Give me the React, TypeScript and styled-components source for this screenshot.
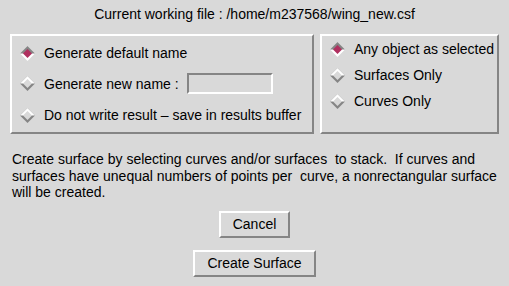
import styled, { createGlobalStyle } from "styled-components";

const BG = "#d9d9d9";
const LIGHT = "#ffffff";
const DARK = "#858585";
const SELECT = "#b03060";

const GlobalStyle = createGlobalStyle`
  html, body {
    margin: 0;
    padding: 0;
    background: ${BG};
  }
  body {
    font-family: "Liberation Sans", Arial, sans-serif;
    font-size: 14px;
    color: #000;
  }
`;

const Dialog = styled.div`
  width: 509px;
  height: 286px;
  background: ${BG};
  box-sizing: border-box;
  display: flex;
  flex-direction: column;
`;

const Title = styled.div`
  height: 34px;
  padding-top: 6px;
  box-sizing: border-box;
  text-align: center;
  line-height: 16px;
`;

const FrameRow = styled.div`
  display: flex;
  gap: 6px;
  padding-left: 10px;
`;

const Frame = styled.div<{ $width: number; $padTop: number }>`
  width: ${({ $width }) => $width}px;
  height: 100px;
  box-sizing: border-box;
  border: 2px solid;
  border-color: ${LIGHT} ${DARK} ${DARK} ${LIGHT};
  padding: ${({ $padTop }) => $padTop}px 0 0 8px;
  display: flex;
  flex-direction: column;
`;

const Option = styled.div<{ $height: number }>`
  height: ${({ $height }) => $height}px;
  display: flex;
  align-items: center;
  gap: 9px;
  white-space: nowrap;
`;

const NameField = styled.div`
  width: 86px;
  height: 21px;
  box-sizing: border-box;
  border: 2px solid;
  border-color: ${DARK} ${LIGHT} ${LIGHT} ${DARK};
  margin-left: 8px;
`;

const Label = styled.span`
  display: flex;
  align-items: center;
`;

const Description = styled.p`
  margin: 17px 0 0 12px;
  width: 490px;
  line-height: 16.5px;
  white-space: pre-wrap;
`;

const Buttons = styled.div`
  margin-top: 10px;
  display: flex;
  flex-direction: column;
  align-items: center;
  gap: 12px;
`;

const PushButton = styled.button`
  height: 27px;
  box-sizing: border-box;
  padding: 0 12px;
  border: 2px solid;
  border-color: ${LIGHT} ${DARK} ${DARK} ${LIGHT};
  background: ${BG};
  font-family: "Liberation Sans", Arial, sans-serif;
  font-size: 14px;
  color: #000;
  line-height: 1;
`;

const Diamond = ({ on }: { on: boolean }) => (
  <svg width="15" height="15" viewBox="0 0 15 15" style={{ flex: "none" }}>
    <polygon points="7.5,0 15,7.5 7.5,15 0,7.5" fill={on ? LIGHT : DARK} />
    <polygon points="0,7.5 7.5,0 15,7.5" fill={on ? DARK : LIGHT} />
    <polygon points="7.5,3 12,7.5 7.5,12 3,7.5" fill={on ? SELECT : BG} />
  </svg>
);

const App = () => (
  <>
    <GlobalStyle />
    <Dialog>
      <Title>Current working file : /home/m237568/wing_new.csf</Title>
      <FrameRow>
        <Frame $width={304} $padTop={3}>
          <Option $height={28}>
            <Diamond on />
            <Label>Generate default name</Label>
          </Option>
          <Option $height={33}>
            <Diamond on={false} />
            <Label>
              Generate new name :
              <NameField />
            </Label>
          </Option>
          <Option $height={30}>
            <Diamond on={false} />
            <Label>Do not write result – save in results buffer</Label>
          </Option>
        </Frame>
        <Frame $width={179} $padTop={0}>
          <Option $height={26}>
            <Diamond on />
            <Label>Any object as selected</Label>
          </Option>
          <Option $height={26}>
            <Diamond on={false} />
            <Label>Surfaces Only</Label>
          </Option>
          <Option $height={26}>
            <Diamond on={false} />
            <Label>Curves Only</Label>
          </Option>
        </Frame>
      </FrameRow>
      <Description>
        {"Create surface by selecting curves and/or surfaces  to stack.  If curves and\nsurfaces have unequal numbers of points per  curve, a nonrectangular surface\nwill be created."}
      </Description>
      <Buttons>
        <PushButton>Cancel</PushButton>
        <PushButton>Create Surface</PushButton>
      </Buttons>
    </Dialog>
  </>
);

export default App;
